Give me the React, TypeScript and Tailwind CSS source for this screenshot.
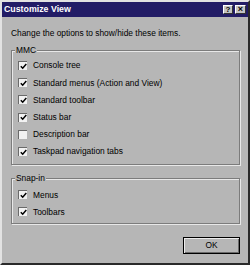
import React from 'react';

const font = { fontFamily: '"Liberation Sans", Arial, sans-serif' };

function Check({ label, checked }: { label: string; checked: boolean }) {
  return (
    <div className="flex h-[17.2px] items-center gap-[6px] pl-[6px]">
      <span className="flex h-[9px] w-[9px] items-center justify-center border-t border-l border-[#6a6a6a] border-r-[#eeeeee] border-b-[#eeeeee] bg-[#f2f2f2]">
        {checked && (
          <svg width="7" height="7" viewBox="0 0 7 7">
            <path d="M0.8 3.2 L2.7 5.2 L6.3 1" fill="none" stroke="#000" strokeWidth="1.5" />
          </svg>
        )}
      </span>
      <span className="text-[8.4px] leading-none text-black">{label}</span>
    </div>
  );
}

function Group({ title, children, className }: { title: string; children: React.ReactNode; className?: string }) {
  return (
    <fieldset className={`border border-[#7c7c7c] shadow-[inset_1px_1px_0_#e8e8e8,1px_1px_0_#e8e8e8] ${className ?? ''}`}>
      <legend className="ml-[3px] bg-[#b6b6b6] px-[1px] text-[8.4px] leading-[11px] text-black">{title}</legend>
      {children}
    </fieldset>
  );
}

export default function App() {
  return (
    <div
      className="flex h-[265px] w-[250px] flex-col border-2 border-t-[#e2e2e2] border-l-[#e2e2e2] border-r-[#2a2a2a] border-b-[#2a2a2a] bg-[#b6b6b6]"
      style={font}
    >
      <div className="flex h-[15px] items-center justify-between bg-[#221c66] pl-[2px] pr-[2px]">
        <span className="text-[8.8px] font-bold leading-none text-white">Customize View</span>
        <div className="flex gap-[2px]">
          <span className="flex h-[9px] w-[10px] items-center justify-center border border-t-white border-l-white border-r-[#333] border-b-[#333] bg-[#c4c4c4] text-[8px] font-bold leading-none text-black">
            ?
          </span>
          <span className="flex h-[9px] w-[11px] items-center justify-center border border-t-white border-l-white border-r-[#333] border-b-[#333] bg-[#c4c4c4] text-[9px] font-bold leading-none text-black">
            ×
          </span>
        </div>
      </div>

      <div className="flex flex-1 flex-col px-[9px] pr-[8px]">
        <p className="mt-[10.5px] text-[8.4px] leading-[11px] text-black">Change the options to show/hide these items.</p>

        <Group title="MMC" className="mt-[6px] pt-[1.5px] pb-[3.5px]">
          <Check label="Console tree" checked />
          <Check label="Standard menus (Action and View)" checked />
          <Check label="Standard toolbar" checked />
          <Check label="Status bar" checked />
          <Check label="Description bar" checked={false} />
          <Check label="Taskpad navigation tabs" checked />
        </Group>

        <Group title="Snap-in" className="mt-[8.5px] pt-[2px] pb-[2.5px]">
          <Check label="Menus" checked />
          <Check label="Toolbars" checked />
        </Group>

        <div className="mt-[12.5px] flex justify-end">
          <button
            type="button"
            className="h-[17px] w-[57px] border border-black bg-[#b6b6b6] text-[8.4px] leading-none text-black shadow-[inset_1px_1px_0_#ececec,inset_-1px_-1px_0_#6a6a6a]"
          >
            OK
          </button>
        </div>
      </div>
    </div>
  );
}
